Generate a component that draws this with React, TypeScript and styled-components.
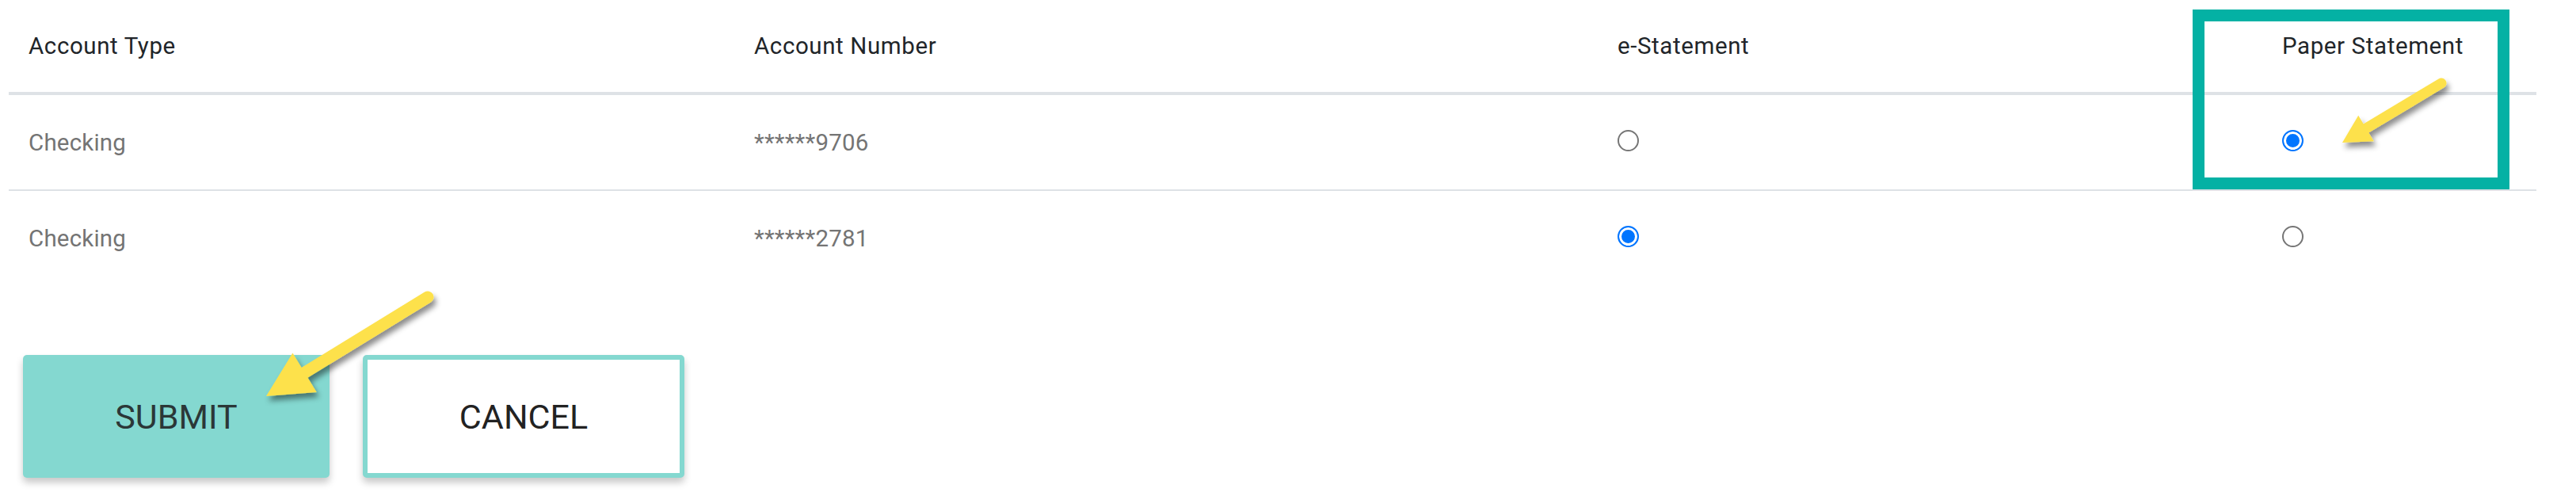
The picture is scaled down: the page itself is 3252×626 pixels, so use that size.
import React from 'react'
import styled, { createGlobalStyle } from 'styled-components'

const GlobalStyle = createGlobalStyle`
  body {
    margin: 0;
    background: #ffffff;
    font-family: Roboto, "Liberation Sans", Arial, sans-serif;
  }
`

const Colors = {
  line: '#dee2e6',
  heading: '#212529',
  body: '#747474',
  teal: '#04b1a4',
  mint: '#84d8d0',
  yellow: '#fde14b',
  radio: '#0075ff',
}

const Page = styled.div`
  position: relative;
  height: 626px;
  padding: 0 50px 0 11px;
  overflow: hidden;
`
const TableWrap = styled.div`
  position: relative;
`
const Table = styled.table`
  width: 3191px;
  table-layout: fixed;
  border-collapse: separate;
  border-spacing: 0;
`
const Col = styled.col<{ w: number }>`
  width: ${(p) => p.w}px;
`
const HeadCell = styled.th`
  height: 116px;
  padding: 0 25px;
  text-align: left;
  vertical-align: middle;
  font-size: 29.5px;
  font-weight: 400;
  letter-spacing: 0.6px;
  color: ${Colors.heading};
  border-bottom: 4px solid ${Colors.line};
`
const Cell = styled.td<{ divider?: boolean }>`
  height: 119px;
  padding: 0 25px;
  vertical-align: middle;
  font-size: 29.5px;
  letter-spacing: 0.2px;
  color: ${Colors.body};
  border-bottom: ${(p) => (p.divider ? `2px solid ${Colors.line}` : 'none')};
`
const Radio = styled.input`
  appearance: none;
  display: block;
  width: 27px;
  height: 27px;
  margin: 0 0 5px 0;
  border-radius: 50%;
  border: 2px solid #767676;
  background: #fff;
  box-sizing: border-box;
  &:checked {
    border-color: ${Colors.radio};
    background: ${Colors.radio};
    box-shadow: inset 0 0 0 3px #fff;
  }
`
const Highlight = styled.div`
  position: absolute;
  left: 2757px;
  top: 12px;
  width: 400px;
  height: 227px;
  box-sizing: border-box;
  border: 15px solid ${Colors.teal};
  pointer-events: none;
`
const Actions = styled.div`
  display: flex;
  gap: 42px;
  margin-top: 88px;
  padding-left: 18px;
`
const Button = styled.button`
  height: 155px;
  box-sizing: border-box;
  border-radius: 5px;
  font-family: Roboto, "Liberation Sans", Arial, sans-serif;
  font-size: 43px;
  font-weight: 400;
  box-shadow: 0 6px 10px rgba(0, 0, 0, 0.22);
  cursor: pointer;
`
const SubmitButton = styled(Button)`
  width: 387px;
  border: none;
  background: ${Colors.mint};
  color: #2b3737;
`
const CancelButton = styled(Button)`
  width: 406px;
  border: 6px solid ${Colors.mint};
  background: #fff;
  color: #222;
`
const Overlay = styled.svg`
  position: absolute;
  left: 0;
  top: 0;
  pointer-events: none;
  z-index: 2;
`

type Pt = [number, number]

const Arrow = ({
  tail,
  tip,
  headLen,
  headHalf,
  shaft,
}: {
  tail: Pt
  tip: Pt
  headLen: number
  headHalf: number
  shaft: number
}): JSX.Element => {
  const dx = tip[0] - tail[0]
  const dy = tip[1] - tail[1]
  const len = Math.hypot(dx, dy)
  const ux = dx / len
  const uy = dy / len
  const bx = tip[0] - ux * headLen
  const by = tip[1] - uy * headLen
  const px = -uy
  const py = ux
  const head = [
    [tip[0], tip[1]],
    [bx + px * headHalf, by + py * headHalf],
    [bx - px * headHalf, by - py * headHalf],
  ]
    .map((p) => p.join(','))
    .join(' ')
  return (
    <g filter="url(#arrowShadow)">
      <line
        x1={tail[0]}
        y1={tail[1]}
        x2={bx + ux * 4}
        y2={by + uy * 4}
        stroke={Colors.yellow}
        strokeWidth={shaft}
        strokeLinecap="round"
      />
      <polygon points={head} fill={Colors.yellow} strokeLinejoin="round" />
    </g>
  )
}

const accounts = [
  { type: 'Checking', number: '******9706', paper: true },
  { type: 'Checking', number: '******2781', paper: false },
]

const App = (): JSX.Element => {
  const noop = (): void => undefined

  return (
    <>
      <GlobalStyle />
      <Page>
        <TableWrap>
          <Table>
            <colgroup>
              <Col w={916} />
              <Col w={1090} />
              <Col w={839} />
              <Col w={346} />
            </colgroup>
            <thead>
              <tr>
                <HeadCell>Account Type</HeadCell>
                <HeadCell>Account Number</HeadCell>
                <HeadCell>e-Statement</HeadCell>
                <HeadCell>Paper Statement</HeadCell>
              </tr>
            </thead>
            <tbody>
              {accounts.map((acc, i) => {
                const divider = i < accounts.length - 1
                return (
                  <tr key={acc.number}>
                    <Cell divider={divider}>{acc.type}</Cell>
                    <Cell divider={divider}>{acc.number}</Cell>
                    <Cell divider={divider}>
                      <Radio
                        type="radio"
                        name={`delivery-${i}`}
                        checked={!acc.paper}
                        onChange={noop}
                      />
                    </Cell>
                    <Cell divider={divider}>
                      <Radio
                        type="radio"
                        name={`delivery-${i}`}
                        checked={acc.paper}
                        onChange={noop}
                      />
                    </Cell>
                  </tr>
                )
              })}
            </tbody>
          </Table>
          <Highlight />
        </TableWrap>

        <Actions>
          <SubmitButton>SUBMIT</SubmitButton>
          <CancelButton>CANCEL</CancelButton>
        </Actions>

        <Overlay width={3252} height={626} viewBox="0 0 3252 626">
          <defs>
            <filter id="arrowShadow" x="-20%" y="-20%" width="150%" height="150%">
              <feDropShadow dx="3" dy="6" stdDeviation="3.5" floodColor="#000" floodOpacity="0.45" />
            </filter>
          </defs>
          <Arrow tail={[3082, 105]} tip={[2957, 180]} headLen={35} headHalf={19} shaft={13} />
          <Arrow tail={[540, 375]} tip={[336, 500]} headLen={57} headHalf={29} shaft={15} />
        </Overlay>
      </Page>
    </>
  )
}

export default App
